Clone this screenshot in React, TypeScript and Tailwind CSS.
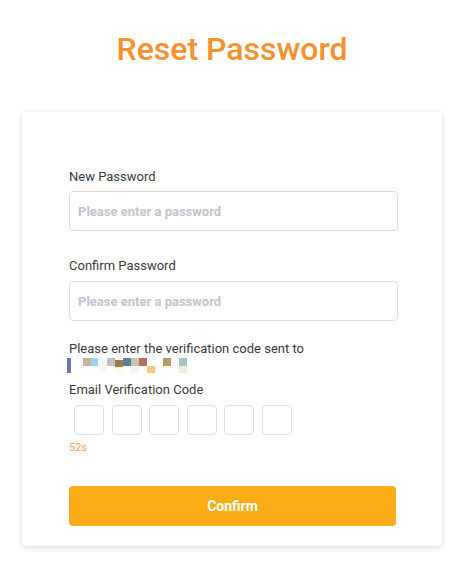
import { useState } from "react";

const CODE_LENGTH = 6;

// pixelated, redacted e-mail address
const MASK_BLOCKS: [number, number, number, number, string][] = [
  [3, 3, 4, 8, "#5f7ea3"],
  [3, 11, 4, 7, "#7570b0"],
  [19, 3, 8, 8, "#c8b49a"],
  [27, 3, 7, 8, "#9dd4f5"],
  [34, 3, 7, 8, "#eef7fd"],
  [35, 11, 8, 7, "#fbf6f0"],
  [43, 3, 8, 8, "#c0c1c3"],
  [51, 5, 8, 7, "#a07a4a"],
  [51, 12, 8, 6, "#fbfbee"],
  [59, 3, 8, 8, "#5e7f90"],
  [67, 3, 8, 8, "#c8c4b4"],
  [67, 11, 8, 7, "#eef8fb"],
  [75, 3, 8, 8, "#b87060"],
  [83, 11, 8, 8, "#fcc882"],
  [99, 3, 8, 8, "#b89a68"],
  [115, 3, 8, 8, "#a8c0c8"],
  [115, 11, 8, 7, "#ecf0e0"],
];

export default function App() {
  const [password, setPassword] = useState("");
  const [confirm, setConfirm] = useState("");
  const [code, setCode] = useState<string[]>(Array(CODE_LENGTH).fill(""));

  const setDigit = (i: number, value: string) => {
    const next = [...code];
    next[i] = value.slice(-1);
    setCode(next);
  };

  return (
    <div
      className="min-h-screen bg-white pl-[22px]"
      style={{ fontFamily: "Roboto, 'Noto Sans', sans-serif" }}
    >
      <h1 className="w-[420px] pt-[29px] text-center text-[32px] leading-[40px] font-medium text-[#f7912d]">
        Reset Password
      </h1>

      <div className="mt-[43px] flex w-[420px] flex-col rounded-[4px] bg-white pt-[57px] pr-[44px] pb-[20px] pl-[47px] shadow-[0_1px_6px_rgba(0,0,0,0.16)]">
        <label className="text-[13px] leading-4 text-[#3a3a3a]">New Password</label>
        <input
          type="password"
          value={password}
          onChange={(e) => setPassword(e.target.value)}
          placeholder="Please enter a password"
          className="mt-[6px] h-[40px] w-full rounded-[4px] border border-[#e6dace] px-2 text-[13px] font-bold text-[#333] outline-none placeholder:text-[#c0c4cc]"
        />

        <label className="mt-[27px] text-[13px] leading-4 text-[#3a3a3a]">
          Confirm Password
        </label>
        <input
          type="password"
          value={confirm}
          onChange={(e) => setConfirm(e.target.value)}
          placeholder="Please enter a password"
          className="mt-[7px] h-[40px] w-full rounded-[4px] border border-[#dcdfe6] px-2 text-[13px] font-bold text-[#333] outline-none placeholder:text-[#c0c4cc]"
        />

        <p className="mt-[20px] text-[13px] leading-4 text-[#3a3a3a]">
          Please enter the verification code sent to
        </p>
        <svg width="130" height="16" viewBox="0 2 130 16" className="-ml-[5px]">
          {MASK_BLOCKS.map(([x, y, w, h, c], i) => (
            <rect key={i} x={x} y={y} width={w} height={h} fill={c} />
          ))}
        </svg>

        <label className="mt-[9px] text-[13px] leading-4 text-[#3a3a3a]">
          Email Verification Code
        </label>
        <div className="mt-[7px] ml-[5px] flex gap-[7.6px]">
          {code.map((d, i) => (
            <input
              key={i}
              value={d}
              onChange={(e) => setDigit(i, e.target.value)}
              className="h-[30px] w-[30px] rounded-[4px] border border-[#dcdfe6] text-center text-[14px] outline-none"
            />
          ))}
        </div>
        <span className="mt-[6px] text-[11px] leading-[14px] text-[#f59d63]">52s</span>

        <button
          type="button"
          className="mt-[31px] h-[40px] w-[327px] rounded-[4px] bg-[#fbad17] text-[14px] font-bold text-white"
        >
          Confirm
        </button>
      </div>
    </div>
  );
}
